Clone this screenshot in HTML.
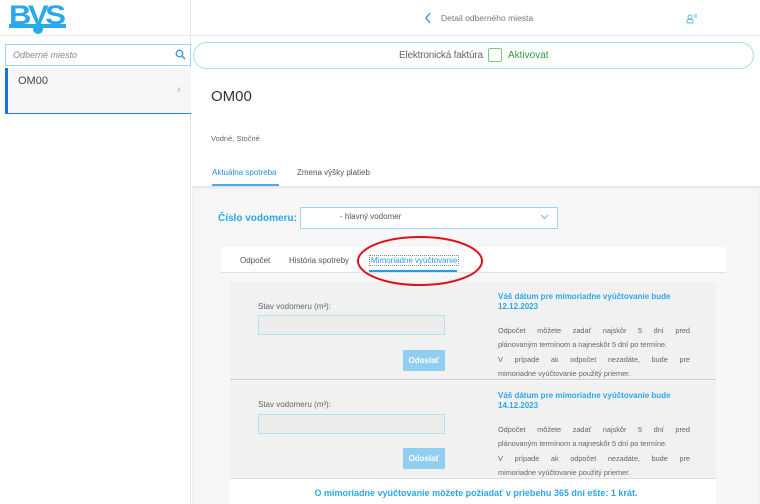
<!DOCTYPE html><html><head><meta charset="utf-8"><style>
*{box-sizing:border-box;margin:0;padding:0}
body{width:760px;height:504px;overflow:hidden;font-family:"Liberation Sans",sans-serif;background:#fff;position:relative;color:#555}
.a{position:absolute}
.p{position:absolute;width:192px;font-size:7.3px;color:#666;line-height:14.3px}
.p div{white-space:nowrap}
.j{text-align:justify;text-align-last:justify}
</style></head><body>
<div class="a" style="left:0;top:0;width:191px;height:504px;border-right:1px solid #e6e6e6"></div>
<div class="a" style="left:0;top:35px;width:760px;height:1px;background:#ececec"></div>
<div class="a" style="left:9px;top:1px;font:900 27px 'Liberation Sans',sans-serif;color:#29a8ea;letter-spacing:-3px;line-height:28px;transform:scaleX(1.15);transform-origin:left">BVS</div>
<div class="a" style="left:9px;top:24px;width:57px;height:4px;background:#29a8ea"></div>
<div class="a" style="left:33px;top:26px;width:10px;height:8px;border-radius:0 0 5px 5px;background:#29a8ea"></div>
<div class="a" style="left:5px;top:44px;width:186px;height:22px;border:1px solid #9fd6f3;font:italic 9px 'Liberation Sans';color:#888;padding:5px 7px">Odberné miesto</div>
<svg class="a" style="left:175px;top:49px" width="11" height="11"><circle cx="4.5" cy="4.5" r="3.3" fill="none" stroke="#2a9fe0" stroke-width="1.3"/><path d="M7 7l3 3" stroke="#2a9fe0" stroke-width="1.4"/></svg>
<div class="a" style="left:5px;top:68px;width:186px;height:46px;background:#f7f7f7;border-left:3px solid #1a73d9;border-bottom:1px solid #2a7ed6"></div>
<div class="a" style="left:18px;top:75px;font-size:11px;color:#444">OM00</div>
<div class="a" style="left:177px;top:84px;font-size:10px;color:#999">›</div>
<svg class="a" style="left:424px;top:12px" width="8" height="12"><path d="M6 1L2 6l4 5" fill="none" stroke="#2a9fe0" stroke-width="1.4"/></svg>
<div class="a" style="left:441px;top:13px;font-size:8.5px;color:#777">Detail odberného miesta</div>
<svg class="a" style="left:686px;top:13px" width="11" height="11"><circle cx="4" cy="4" r="2" fill="none" stroke="#5ab8ea"/><rect x="1" y="6.5" width="6" height="3.5" rx="1" fill="none" stroke="#5ab8ea"/><path d="M8 2h3M8 4h3" stroke="#5ab8ea"/></svg>
<div class="a" style="left:193px;top:42px;width:561px;height:27px;border:1.5px solid #a8daf3;border-radius:14px"></div>
<div class="a" style="left:399px;top:50px;font-size:10px;color:#666;width:84px;white-space:nowrap;letter-spacing:-0.2px">Elektronická faktúra</div>
<div class="a" style="left:488px;top:48px;width:14px;height:14px;border:1.3px solid #7cc97e;border-radius:2px"></div>
<div class="a" style="left:508px;top:50px;font-size:10px;color:#2f9e3a">Aktivovat</div>
<div class="a" style="left:211px;top:88px;font-size:15px;color:#333">OM00</div>
<div class="a" style="left:211px;top:134px;font-size:7.5px;color:#666">Vodné, Stočné</div>
<div class="a" style="left:212px;top:168px;font-size:8px;color:#2a8fd0">Aktuálna spotreba</div>
<div class="a" style="left:212px;top:184px;width:67px;height:2px;background:#4aaee8"></div>
<div class="a" style="left:297px;top:168px;font-size:8px;color:#555">Zmena výšky platieb</div>
<div class="a" style="left:192px;top:186px;width:568px;height:318px;background:#f7f7f7;box-shadow:inset 0 2px 2px #e4e4e4"></div>
<div class="a" style="left:218px;top:213px;font-size:10px;font-weight:bold;color:#2aa7e8">Číslo vodomeru:</div>
<div class="a" style="left:300px;top:207px;width:258px;height:22px;border:1px solid #9fd6f3;background:#fff"></div>
<div class="a" style="left:340px;top:212px;font-size:8px;color:#555">- hlavný vodomer</div>
<svg class="a" style="left:540px;top:214px" width="9" height="6"><path d="M1 1l3.5 3.5L8 1" fill="none" stroke="#6bbbe8" stroke-width="1"/></svg>
<div class="a" style="left:221px;top:247px;width:505px;height:26px;background:#fff;border-bottom:1px solid #e0e0e0"></div>
<div class="a" style="left:240px;top:256px;font-size:8px;color:#555">Odpočet</div>
<div class="a" style="left:289px;top:256px;font-size:8px;color:#555">História spotreby</div>
<div class="a" style="left:369px;top:255px;font-size:8px;color:#2a9fe0;border:1px dotted #888;padding:0 1px">Mimoriadne vyúčtovanie</div>
<div class="a" style="left:369px;top:270px;width:88px;height:2px;background:#2a9fe0"></div>
<div class="a" style="left:230px;top:282px;width:486px;height:98px;background:#f1f1f1;border-bottom:1px solid #ccc"></div>
<div class="a" style="left:230px;top:381px;width:486px;height:98px;background:#f1f1f1;border-bottom:1px solid #ddd"></div>
<svg class="a" style="left:355px;top:236px" width="130" height="54"><ellipse cx="65" cy="25" rx="62" ry="24" fill="none" stroke="#e0101a" stroke-width="2"/></svg>
<div class="a" style="left:258px;top:302px;font-size:8px;color:#666">Stav vodomeru (m³):</div>
<div class="a" style="left:258px;top:315px;width:187px;height:20px;background:#ededed;border:1px solid #b8def4"></div>
<div class="a" style="left:403px;top:350px;width:42px;height:21px;background:#8fd0f0;color:#fff;font-size:8px;font-weight:bold;text-align:center;line-height:21px;border-radius:1px">Odoslať</div>
<div class="a" style="left:498px;top:292px;width:195px;font-size:8px;font-weight:bold;color:#2aa7e8;line-height:10px">Váš dátum pre mimoriadne vyúčtovanie bude 12.12.2023</div>
<div class="p" style="left:498px;top:324px"><div class="j">Odpočet môžete zadať najskôr 5 dní pred</div><div>plánovaným termínom a najneskôr 5 dní po termíne.</div><div class="j">V prípade ak odpočet nezadáte, bude pre</div><div>mimoriadne vyúčtovanie použitý priemer.</div></div>
<div class="a" style="left:258px;top:400px;font-size:8px;color:#666">Stav vodomeru (m³):</div>
<div class="a" style="left:258px;top:414px;width:187px;height:20px;background:#ededed;border:1px solid #b8def4"></div>
<div class="a" style="left:403px;top:448px;width:42px;height:21px;background:#8fd0f0;color:#fff;font-size:8px;font-weight:bold;text-align:center;line-height:21px;border-radius:1px">Odoslať</div>
<div class="a" style="left:498px;top:391px;width:195px;font-size:8px;font-weight:bold;color:#2aa7e8;line-height:10px">Váš dátum pre mimoriadne vyúčtovanie bude 14.12.2023</div>
<div class="p" style="left:498px;top:423px"><div class="j">Odpočet môžete zadať najskôr 5 dní pred</div><div>plánovaným termínom a najneskôr 5 dní po termíne.</div><div class="j">V prípade ak odpočet nezadáte, bude pre</div><div>mimoriadne vyúčtovanie použitý priemer.</div></div>
<div class="a" style="left:230px;top:479px;width:486px;height:25px;background:#fff"></div>
<div class="a" style="left:230px;top:488px;width:492px;text-align:center;font-size:9px;font-weight:bold;color:#2aa7e8">O mimoriadne vyúčtovanie môžete požiadať v priebehu 365 dní ešte: 1 krát.</div>
</body></html>
